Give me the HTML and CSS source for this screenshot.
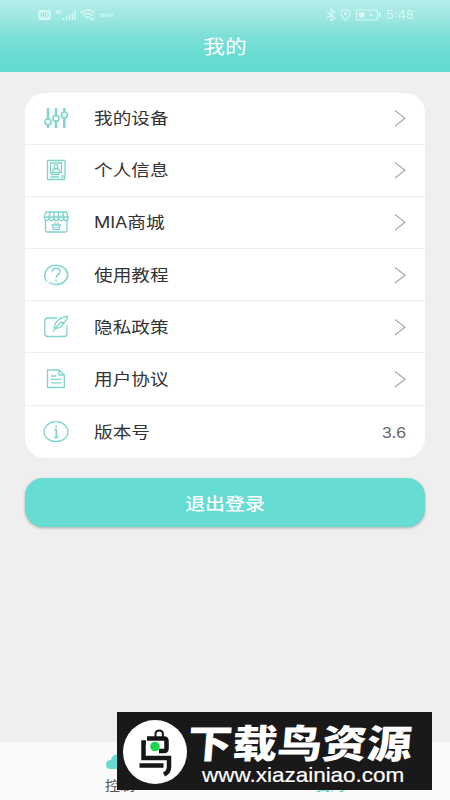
FILE: index.html
```html
<!DOCTYPE html>
<html lang="zh-CN">
<head>
<meta charset="utf-8">
<title>我的</title>
<link rel="stylesheet" href="styles.css">
</head>
<body>
<div class="screen">
  <header class="header">
    <div class="status">
      <svg class="status-left" width="76" height="14" viewBox="0 0 76 14">
        <rect x=".5" y="2" width="12" height="10" rx="1.5" fill="currentColor"/>
        <path d="M3 4.500v5M3 7h2.500M5.500 4.500v5M7.500 4.500v5h1.500l1.200-1.200V5.700L9 4.500z" class="cut"/>
        <text x="17" y="6.300" class="tiny">4G</text>
        <path d="M25.500 10v2M28.500 8.500V12M31.500 6.500V12M34.500 4.500V12M37 2V12" class="bars"/>
        <path d="M42.500 5q7-6 14 0M44.500 7.500q5-4 10 0M47 9.700q2.500-2 5 0M49.500 11.500v.7M53 9.500v3M55.500 9.500v3" class="bars"/>
        <text x="62" y="9" class="tiny">3m/s</text>
      </svg>
      <div class="status-right">
        <svg width="55" height="14" viewBox="0 0 55 14" fill="none" stroke="currentColor" stroke-width="1.200">
          <path d="M1 4l8 6-4 3V1l4 3-8 6"/>
          <path d="M19.500 12.500C17 9.500 15 8 15 5.500C15 3 17 1.700 19.500 1.700S24 3 24 5.500c0 2.500-2 4-4.500 7z"/>
          <circle cx="19.500" cy="5.500" r="1"/>
          <rect x="30.500" y="2" width="21" height="10" rx="2"/>
          <path d="M53.800 4.500v5" stroke-width="1.600"/>
          <path d="M33 4.500h6l-1 5h-5zM38 7h4l3-2v2h3l-4 2V7z" fill="currentColor" stroke="none"/>
        </svg>
        <span class="clock">5:48</span>
      </div>
    </div>
    <h1 class="title">我的</h1>
  </header>

  <main class="main">
    <ul class="menu">
      <li class="row">
        <svg class="icon" viewBox="0 0 28 28"><g stroke-width="2.500"><path d="M6 4v11.500M6 20.500V24M14 4v7.500M14 16.500V24M22.300 4v4M22.300 13.500V24"/></g><g stroke-width="1.700"><circle cx="6" cy="18" r="3"/><circle cx="14" cy="14.300" r="3"/><circle cx="22.300" cy="11" r="3"/></g></svg>
        <span class="label">我的设备</span>
        <svg class="arrow" viewBox="0 0 12 18"><path d="M1 1.500l10 7.700L1 17"/></svg>
      </li>
      <li class="row">
        <svg class="icon" viewBox="0 0 28 28"><path d="M5.500 4.500h17.500v15.500h-3v3.500H5.500zM20 23.500h2.500v-3.500M8.500 7h11v9.500h-11zM8.500 18.500h9M8.500 21h9M10.500 15.500c0-4 7-4 7 0"/><circle cx="14" cy="10.800" r="1.900"/></svg>
        <span class="label">个人信息</span>
        <svg class="arrow" viewBox="0 0 12 18"><path d="M1 1.500l10 7.700L1 17"/></svg>
      </li>
      <li class="row">
        <svg class="icon" viewBox="0 0 28 28"><path d="M4 4h20.500l1.700 5H2.300zM8.200 4L7 9M12 4v5M16.500 4v5M20.500 4l1.200 5M2.300 9c0 4.700 4.700 4.700 4.700 0c0 4.700 4.900 4.700 4.900 0c0 4.700 4.700 4.700 4.700 0c0 4.700 4.900 4.700 4.900 0c0 4.700 4.700 4.700 4.700 0M3.500 12.500v10q0 1.500 1.500 1.500h18.500q1.500 0 1.500-1.500v-10M9.500 17h9.500M10.500 17l1 4.500h5.500l1-4.500M12 17l1.500-2.500M16.800 17l-1.500-2.500M13 19v1M15.500 19v1"/></svg>
        <span class="label"><span class="latin">MIA</span>商城</span>
        <svg class="arrow" viewBox="0 0 12 18"><path d="M1 1.500l10 7.700L1 17"/></svg>
      </li>
      <li class="row">
        <svg class="icon" viewBox="0 0 28 28"><g stroke-width="1.500"><path d="M4.800 20.300C.5 15.300 3.200 4.200 14 4.200c6.500 0 11.700 4.200 11.700 9.600S20.500 23.500 14 23.500c-2.700 0-5-.6-7-2"/><path d="M10.200 10.800c0-4.800 7.800-4.800 7.800-.4c0 3-3.900 3-3.900 6.300M14.100 18.600v1.700"/></g></svg>
        <span class="label">使用教程</span>
        <svg class="arrow" viewBox="0 0 12 18"><path d="M1 1.500l10 7.700L1 17"/></svg>
      </li>
      <li class="row">
        <svg class="icon" viewBox="0 0 28 28"><path d="M15 5H6Q2.800 5 2.800 8v12.500q0 3 3.200 3h16q3 0 3-3v-8M11 18.500C14 13.500 16.500 11 20 8.500M12.500 15.500C12 9 18 4 25.500 3.500C25 7 23 9 20 10l2 .3c-2 3.500-5.500 5.200-9.500 5.200"/></svg>
        <span class="label">隐私政策</span>
        <svg class="arrow" viewBox="0 0 12 18"><path d="M1 1.500l10 7.700L1 17"/></svg>
      </li>
      <li class="row">
        <svg class="icon" viewBox="0 0 28 28"><path d="M5.500 5h11.500l5.300 5v12.500H5.500zM17 5v5h5.300M9 11h5M9 14.300h10.500M9 17.800h10.500"/></svg>
        <span class="label">用户协议</span>
        <svg class="arrow" viewBox="0 0 12 18"><path d="M1 1.500l10 7.700L1 17"/></svg>
      </li>
      <li class="row">
        <svg class="icon" viewBox="0 0 28 28"><ellipse cx="14" cy="13.700" rx="12" ry="10"/><path d="M12.300 11.500h2v8M12 19.500h4.500M14.200 7.500v2" stroke-width="1.700"/></svg>
        <span class="label">版本号</span>
        <span class="version">3.6</span>
      </li>
    </ul>
    <button class="logout"><span class="wide">退出登录</span></button>
  </main>

  <nav class="tabs">
    <div class="tab">
      <svg width="30" height="20" viewBox="0 0 30 20"><path d="M6 16q-5 0-5-4.500T6 7q1-6 8-6t8 6q6 0 6 4.500T23 16z" fill="currentColor"/></svg>
      <span class="tab-label">控制</span>
    </div>
    <div class="tab active">
      <svg width="30" height="20" viewBox="0 0 30 20"><path d="M15 2a4 4 0 010 8 4 4 0 010-8M6 18q0-7 9-7t9 7z" fill="currentColor"/></svg>
      <span class="tab-label">我的</span>
    </div>
  </nav>

  <div class="banner">
    <svg class="bird" viewBox="0 0 66 66">
      <circle cx="33" cy="33" r="32" fill="#fff"/>
      <g fill="none" stroke="#161616" stroke-width="4.500">
        <path d="M25 19.500H42q2.500 0 2.500 2.500v7.500q0 2.500-2.500 2.500h-5M24 23.500h-2.500v15.500h25.500v9q0 5-5 7.500M17.500 46.500h24"/>
        <path d="M33.500 18v-3q0-3.500 3.700-3.500t3.700 3.500v3" stroke-width="2"/>
      </g>
      <circle cx="33" cy="27.500" r="4.800" fill="#1ed34f"/>
    </svg>
    <div class="banner-copy">
      <div class="banner-name">下载鸟资源</div>
      <div class="banner-url">www.xiazainiao.com</div>
    </div>
  </div>
</div>
</body>
</html>
```
FILE: styles.css
```css
* { box-sizing: border-box; }

body {
  margin: 0;
  font-family: "Noto Sans", "Noto Sans CJK SC", sans-serif;
}

.screen {
  position: relative;
  display: flex;
  flex-direction: column;
  width: 450px;
  height: 800px;
  overflow: hidden;
  background: #efefef;
}

.header {
  height: 72px;
  color: #fff;
  background: linear-gradient(#b5ede9 0, #9ee7e1 18px, #7ddfd8 36px, #69ddd3 56px, #61dbd1 100%);
}

.status {
  display: flex;
  justify-content: space-between;
  height: 31px;
  padding: 8px 36px 0 38px;
  color: #d5f8f4;
}

.status-right { display: flex; gap: 5px; height: 14px; }

.clock {
  width: 28px;
  font: 12px/14px Inter, sans-serif;
  white-space: nowrap;
  transform: scaleX(1.08);
  transform-origin: left;
}

.tiny { font: 5.5px Roboto, sans-serif; fill: currentColor; stroke: currentColor; stroke-width: .2; }
.cut { fill: none; stroke: #8fe2db; stroke-width: 1; }
.bars { fill: none; stroke: currentColor; stroke-width: 1.5; }

.title {
  margin: 0;
  font-size: 19px;
  font-weight: 400;
  line-height: 32px;
  text-align: center;
  transform: scaleX(1.14);
}

.main { flex: 1; padding: 20.500px 25px 0; }

.menu {
  margin: 0;
  padding: 0;
  list-style: none;
  background: #fff;
  border-radius: 20px;
}

.row {
  display: flex;
  align-items: center;
  height: 52.200px;
  padding: 0 19px 0 17px;
  border-bottom: 1px solid #eee;
}

.row:last-child { border-bottom: 0; }

.icon {
  width: 28px;
  height: 28px;
  fill: none;
  stroke: #7fd5cc;
  stroke-width: 1.3;
}

.label {
  flex: 1;
  margin-left: 24px;
  color: #333;
  font-size: 16px;
  line-height: 24px;
  transform: scaleX(1.165);
  transform-origin: left;
}

.latin { font-family: Inter, sans-serif; font-size: 15.5px; letter-spacing: -.1px; }

.arrow {
  width: 12px;
  height: 18px;
  fill: none;
  stroke: #aaa;
  stroke-width: 1.2;
}

.version {
  color: #666;
  font: 15px/20px Inter, sans-serif;
  transform: translateY(1px) scaleX(1.1);
  transform-origin: right;
}

.logout {
  display: block;
  width: 400px;
  height: 49px;
  margin-top: 20.500px;
  padding: 0;
  border: 0;
  border-radius: 18px;
  background: #66dcd2;
  box-shadow: 0 1px 3px rgba(0, 0, 0, .28);
  color: #fff;
  font: 500 17px/49px "Noto Sans CJK SC", sans-serif;
}

.wide { display: inline-block; transform: scaleX(1.17); }

.tabs {
  display: grid;
  grid-template-columns: 1fr 1fr;
  height: 58px;
  padding: 11px 15px 0;
  background: #fafafa;
}

.tab { display: flex; flex-direction: column; align-items: center; color: #66dcd2; }

.tab-label {
  color: #555;
  font-size: 13px;
  line-height: 19px;
  margin-top: 3px;
  transform: scaleX(1.15);
}

.active .tab-label { color: #42cfc2; }

.banner {
  position: absolute;
  left: 117px;
  top: 712px;
  display: flex;
  width: 315px;
  height: 78px;
  padding: 7px 5px;
  background: #191919;
  color: #fff;
}

.bird { flex: none; width: 66px; height: 66px; }

.banner-copy { width: 230px; }

.banner-name {
  height: 42px;
  font: 900 39px/44px "Noto Sans CJK SC", sans-serif;
  white-space: nowrap;
  transform: scaleX(1.15) skewX(-4deg);
  transform-origin: left;
}

.banner-url {
  margin: 2px 0 0 14px;
  font: 21px/24px "Liberation Sans", sans-serif;
  -webkit-text-stroke: .2px #fff;
  white-space: nowrap;
  transform: scaleX(1.07);
  transform-origin: left;
}
```
